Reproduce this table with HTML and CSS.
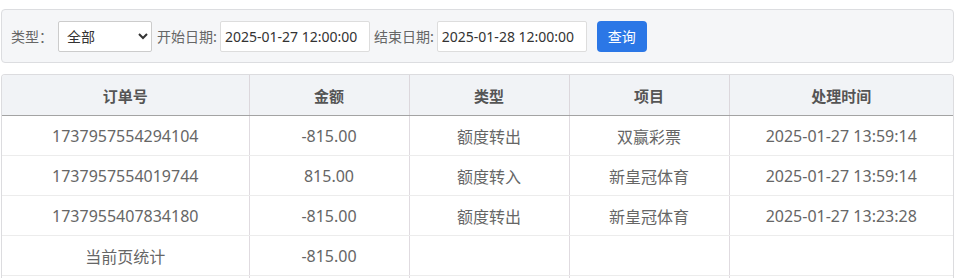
FILE: index.html
```html
<!DOCTYPE html>
<html lang="zh-CN">
<head>
<meta charset="utf-8">
<title>额度转换记录</title>
<link rel="stylesheet" href="styles.css">
</head>
<body>
<div class="page">
  <form class="filter">
    <label class="lbl lbl-type">类型：</label>
    <select class="sel">
      <option>全部</option>
      <option>额度转入</option>
      <option>额度转出</option>
    </select>
    <label class="lbl">开始日期:</label>
    <input class="inp" type="text" value="2025-01-27 12:00:00">
    <label class="lbl">结束日期:</label>
    <input class="inp" type="text" value="2025-01-28 12:00:00">
    <button class="btn" type="button">查询</button>
  </form>
  <div class="tablewrap">
    <table class="grid">
      <colgroup>
        <col class="c1"><col class="c2"><col class="c3"><col class="c4"><col class="c5">
      </colgroup>
      <thead>
        <tr><th>订单号</th><th>金额</th><th>类型</th><th>项目</th><th>处理时间</th></tr>
      </thead>
      <tbody>
        <tr><td>1737957554294104</td><td>-815.00</td><td>额度转出</td><td>双赢彩票</td><td>2025-01-27 13:59:14</td></tr>
        <tr><td>1737957554019744</td><td>815.00</td><td>额度转入</td><td>新皇冠体育</td><td>2025-01-27 13:59:14</td></tr>
        <tr><td>1737955407834180</td><td>-815.00</td><td>额度转出</td><td>新皇冠体育</td><td>2025-01-27 13:23:28</td></tr>
        <tr><td>当前页统计</td><td>-815.00</td><td></td><td></td><td></td></tr>
        <tr><td>&nbsp;</td><td></td><td></td><td></td><td></td></tr>
      </tbody>
    </table>
  </div>
</div>
</body>
</html>
```
FILE: styles.css
```css
html, body {
  margin: 0;
  padding: 0;
  background: #fff;
}
body {
  font-family: "Noto Sans", "Noto Sans CJK SC", sans-serif;
  color: #666;
}
.page {
  margin: 9px 8px 0 1px;
}
.filter {
  display: flex;
  align-items: center;
  height: 52px;
  padding: 0 9px;
  background: #f5f6f8;
  border: 1px solid #dcdde0;
  border-radius: 4px;
  margin: 0;
}
.lbl {
  font-size: 14px;
  color: #666;
  margin-right: 3px;
  white-space: nowrap;
  font-family: "Noto Sans CJK SC", sans-serif;
}
.lbl-type {
  margin-right: 5px;
}
.sel {
  width: 94px;
  height: 31px;
  border: 1px solid #ccc;
  border-radius: 2px;
  background: #fff;
  font-size: 14px;
  color: #333;
  padding: 0 4px;
  margin-right: 5px;
  font-family: "Noto Sans CJK SC", sans-serif;
}
.inp {
  width: 150px;
  height: 31px;
  box-sizing: border-box;
  border: 1px solid #ddd;
  border-radius: 2px;
  background: #fff;
  font-size: 14px;
  color: #333;
  padding: 0 4px;
  margin: 0 4px 0 0;
  font-family: "Noto Sans", sans-serif;
}
.inp + .btn {
  margin-left: 6px;
}
.btn {
  width: 50px;
  height: 31px;
  border: none;
  border-radius: 4px;
  background: #2b77e6;
  color: #fff;
  font-size: 14px;
  font-family: "Noto Sans CJK SC", sans-serif;
  padding: 0;
}
.tablewrap {
  margin-top: 11px;
  border: 1px solid #dcdcdf;
  border-bottom: none;
  border-radius: 4px 4px 0 0;
  overflow: hidden;
}
.grid {
  width: 100%;
  border-collapse: collapse;
  table-layout: fixed;
}
.c1 { width: 247px; }
.c2 { width: 160px; }
.c3 { width: 160px; }
.c4 { width: 160px; }
.grid th {
  height: 40px;
  background: #f1f3f6;
  font-size: 15px;
  font-weight: bold;
  color: #555;
  border-left: 1px solid #dcd7dc;
  border-bottom: 1px solid #a3a3a3;
  padding: 0;
  font-family: "Noto Sans CJK SC", sans-serif;
}
.grid td {
  height: 39px;
  font-size: 16px;
  color: #666;
  text-align: center;
  border-left: 1px solid #e0dbe0;
  border-bottom: 1px solid #ececec;
  padding: 0;
}
.grid th:first-child, .grid td:first-child {
  border-left: none;
}
```
